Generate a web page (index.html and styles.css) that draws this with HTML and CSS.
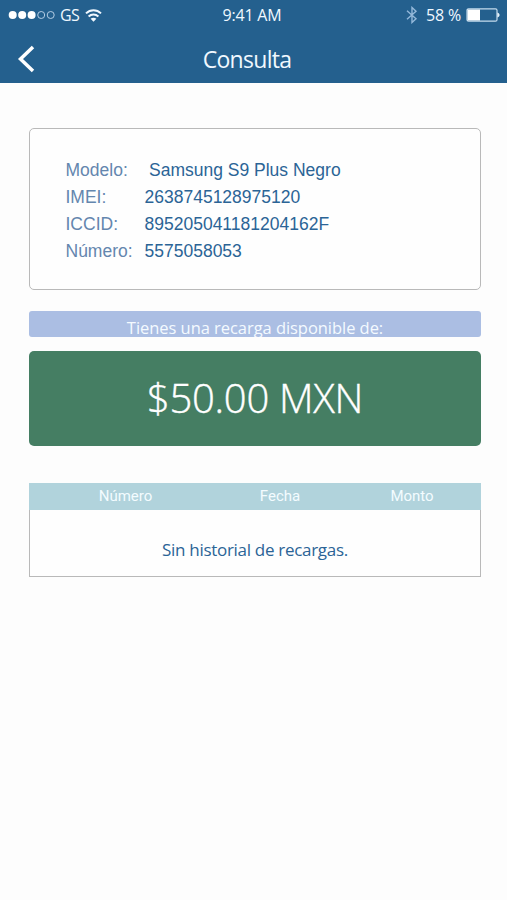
FILE: index.html
```
<!DOCTYPE html>
<html lang="es">
<head>
    <meta charset="UTF-8">
    <meta name="viewport" content="width=device-width, initial-scale=1.0">
    <title>Consulta</title>
    <link rel="stylesheet" href="styles.css">
</head>
<body>
    <header class="encabezado">
        <div class="barra-estado">
            <div class="estado-izq">
                <svg class="senal" width="47" height="10" viewBox="0 0 47 10">
                    <circle cx="4.7" cy="5" r="4" fill="#fff"/>
                    <circle cx="14.2" cy="5" r="4" fill="#fff"/>
                    <circle cx="23.6" cy="5" r="4" fill="#fff"/>
                    <circle cx="33.2" cy="5" r="3.5" fill="none" stroke="#b4cde4"/>
                    <circle cx="42.7" cy="5" r="3.5" fill="none" stroke="#b4cde4"/>
                </svg>
                <span class="operador">GS</span>
                <svg class="wifi" width="17" height="13" viewBox="0 0 17 13">
                    <path d="M1 4.4C5.3 .3 11.7 .3 16 4.4M3.6 7.4c2.8-2.6 7-2.6 9.8 0" fill="none" stroke="#f0f8ff" stroke-width="2"/>
                    <path d="M5.6 9.8c1.8-1.4 4-1.4 5.8 0L8.5 12.8z" fill="#f0f8ff"/>
                </svg>
            </div>
            <span class="hora">9:41 AM</span>
            <div class="estado-der">
                <svg class="bluetooth" width="12" height="18" viewBox="0 0 12 18">
                    <path d="M1 4.8l9 8L6 16.5v-15l4 3.7L1 13.2" fill="none" stroke="#94b9da" stroke-width="1.4"/>
                </svg>
                <span class="porcentaje">58 %</span>
                <svg class="bateria" width="34" height="14" viewBox="0 0 34 14">
                    <rect x="1" y=".8" width="30" height="12.4" rx="1.5" fill="none" stroke="#c4dbed" stroke-width="1.2"/>
                    <rect x="1.5" y="1.5" width="12.5" height="11" fill="#fff"/>
                    <path d="M31.3 4.5c3 .8 3 4.2 0 5z" fill="#e4f1fa"/>
                </svg>
            </div>
        </div>
        <nav class="barra-titulo">
            <svg class="regresar" width="18" height="28" viewBox="0 0 18 28">
                <path d="M16 2L3.5 14 16 26" fill="none" stroke="#fff" stroke-width="3.5"/>
            </svg>
            <h1>Consulta</h1>
        </nav>
    </header>

    <main>
        <dl class="equipo">
            <dt>Modelo:</dt>
            <dd class="modelo">Samsung S9 Plus Negro</dd>
            <dt>IMEI:</dt>
            <dd>2638745128975120</dd>
            <dt>ICCID:</dt>
            <dd>895205041181204162F</dd>
            <dt>Número:</dt>
            <dd>5575058053</dd>
        </dl>

        <p class="aviso">Tienes una recarga disponible de:</p>
        <div class="monto">$50.00 MXN</div>

        <section class="historial">
            <div class="historial-titulos">
                <span>Número</span>
                <span>Fecha</span>
                <span>Monto</span>
            </div>
            <p class="vacio">Sin historial de recargas.</p>
        </section>
    </main>
</body>
</html>
```
FILE: styles.css
```
* {
    box-sizing: border-box;
}
body {
    margin: 0;
    height: 900px;
    overflow: hidden;
    background-color: #fdfdfd;
    font-family: 'Open Sans', 'Noto Sans', sans-serif;
}
h1, p, dl, dd {
    margin: 0;
    font-weight: normal;
}
.encabezado {
    height: 83px;
    background-color: #24608e;
    color: #f0f8ff;
}
.barra-estado {
    display: grid;
    grid-template-columns: 1fr auto 1fr;
    align-items: center;
    height: 30px;
    padding: 0 7px 0 8px;
    font-size: 16px;
    line-height: 30px;
}
.estado-izq, .estado-der {
    display: flex;
    align-items: center;
}
.estado-der {
    justify-content: flex-end;
}
.operador {
    margin-left: 5px;
    letter-spacing: -0.6px;
}
.wifi {
    margin-left: 6px;
}
.hora {
    margin-right: 4px;
    letter-spacing: -0.2px;
}
.bluetooth {
    margin-right: 8px;
}
.porcentaje {
    margin-right: 5px;
    letter-spacing: -0.2px;
}
.barra-titulo {
    display: grid;
    grid-template-columns: 1fr auto 1fr;
    align-items: center;
    height: 58px;
    padding: 0 30px 0 17px;
}
.barra-titulo h1 {
    font-size: 23px;
    line-height: 30px;
    letter-spacing: -0.7px;
}

main {
    padding: 45px 26px 0 29px;
}
.equipo {
    display: grid;
    grid-template-columns: 79px 1fr;
    grid-auto-rows: 27px;
    height: 162px;
    padding: 28px 35.5px;
    border: 1px solid #b9b9b9;
    border-radius: 5px;
    background-color: #fefefe;
    font-family: 'Liberation Sans', Arial, sans-serif;
    font-size: 17.5px;
    line-height: 27px;
    color: #2b6496;
}
.equipo dt {
    color: #6486ae;
}
.equipo .modelo {
    padding-left: 4.5px;
}
.aviso {
    height: 26px;
    margin-top: 21px;
    overflow: hidden;
    border-radius: 3px;
    background-color: #abbee3;
    color: #f4faff;
    font-size: 16.5px;
    line-height: 34px;
    text-align: center;
    letter-spacing: -0.05px;
}
.monto {
    height: 95px;
    margin-top: 14px;
    border-radius: 5px;
    background-color: #457e63;
    color: #fff;
    font-size: 40px;
    font-weight: 300;
    line-height: 93px;
    text-align: center;
    letter-spacing: -0.3px;
    -webkit-text-stroke: 0.4px #fff;
}
.historial {
    height: 94px;
    margin-top: 37px;
    border: 1px solid #b9b9b9;
    border-top: none;
    background-color: #fefefe;
}
.historial-titulos {
    display: grid;
    grid-template-columns: 193px 116px 148px;
    height: 27px;
    margin: 0 -1px;
    overflow: hidden;
    background-color: #b1d3dc;
    color: #f4fcff;
    font-family: Roboto, sans-serif;
    font-size: 15px;
    line-height: 27px;
    text-align: center;
}
.vacio {
    color: #2b6496;
    font-size: 17px;
    line-height: 80px;
    text-align: center;
    letter-spacing: -0.3px;
}
```
